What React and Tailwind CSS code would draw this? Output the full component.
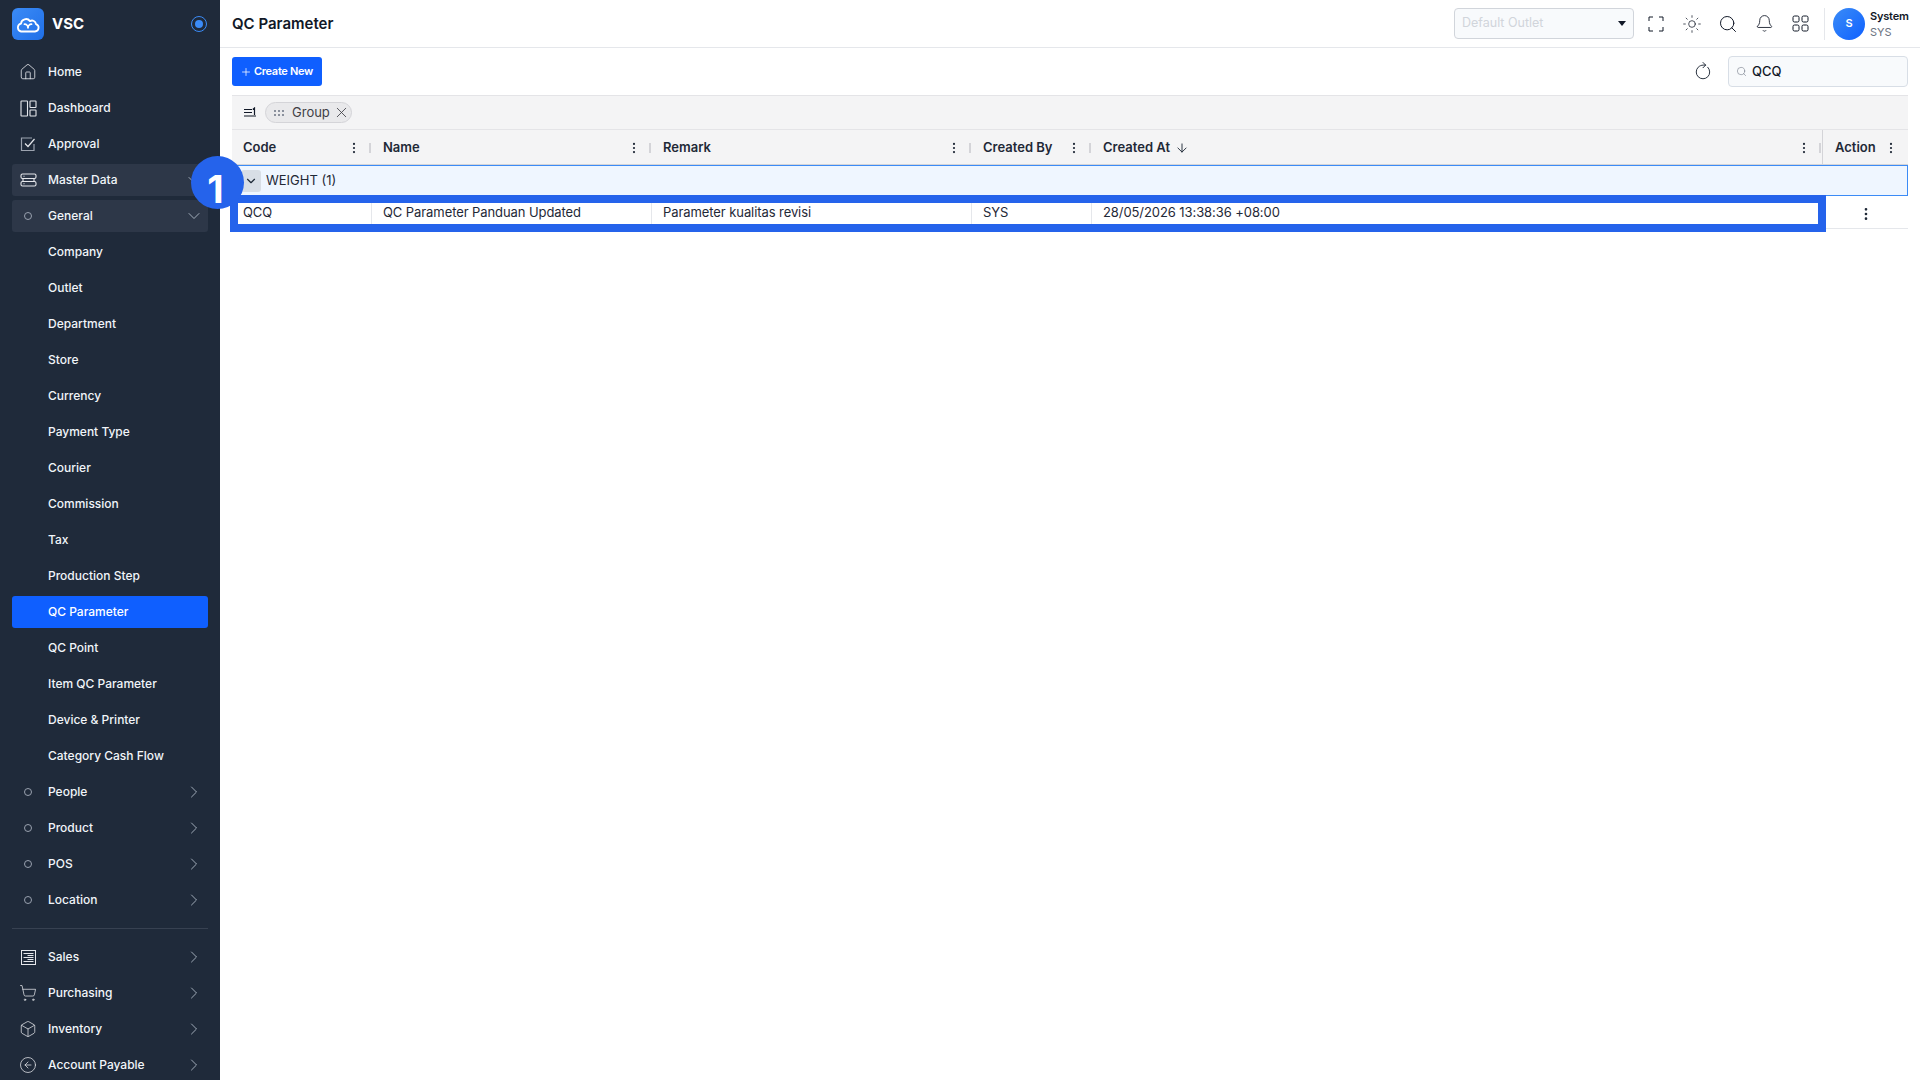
import React from 'react';
import { ChevronDown, ChevronRight, ArrowDown, X, Plus, Search, Bell, Sun, RotateCw, EllipsisVertical, Home, ShoppingCart, Box, CircleArrowLeft } from 'lucide-react';

const DashboardIcon = () => (
  <svg width="17" height="17" viewBox="0 0 17 17" fill="none" stroke="currentColor" strokeWidth="1.1">
    <rect x="1" y="1" width="6.5" height="15" rx="0.5" />
    <rect x="10" y="1" width="6" height="6.5" rx="0.5" />
    <rect x="10" y="10" width="6" height="6" rx="0.5" />
  </svg>
);

const ApprovalIcon = () => (
  <svg width="16" height="16" viewBox="0 0 16 16" fill="none" stroke="currentColor" strokeWidth="1.2">
    <path d="M14 8v6.5H1.5V2H12" stroke="#9ca3af" />
    <path d="M5 7.5l3 3 6.5-7.5" />
  </svg>
);

const ServerIcon = () => (
  <svg width="17" height="14" viewBox="0 0 17 14" fill="none" stroke="currentColor" strokeWidth="1.1">
    <rect x="1" y="1" width="15" height="4.5" rx="1.5" />
    <path d="M3 5.5v3M14 5.5v3" />
    <rect x="1" y="8.5" width="15" height="4.5" rx="1.5" />
    <path d="M3.5 3.2h1M3.5 10.8h1" />
  </svg>
);

const SalesIcon = () => (
  <svg width="15" height="15" viewBox="0 0 15 15" fill="none" stroke="currentColor" strokeWidth="1">
    <rect x="0.5" y="0.5" width="14" height="14" />
    <path d="M2.5 3.5h10M6.5 5.5h6M2.5 7.5h10M6.5 9.5h6M2.5 11.5h10" />
  </svg>
);

const CloudLogo = () => (
  <svg width="24" height="18" viewBox="0 0 24 18" fill="none" stroke="white" strokeWidth="1.8" strokeLinecap="round" strokeLinejoin="round">
    <path d="M5 16.5h14a3.8 3.8 0 0 0 1-7.4 4 4 0 0 0-6-3 5 5 0 0 0-9 2.6A4 4 0 0 0 5 16.5z" />
    <path d="M8.5 9.2c2 0 3.5 1.6 3.5 3.6 0-2 1.5-3.6 3.5-3.6" />
  </svg>
);

const ExpandIcon = () => (
  <svg width="16" height="16" viewBox="0 0 16 16" fill="none" stroke="#111827" strokeWidth="1">
    <path d="M1 5V1h4M11 1h4v4M15 11v4h-4M5 15H1v-4" />
  </svg>
);

const AppsIcon = () => (
  <svg width="17" height="17" viewBox="0 0 17 17" fill="none" stroke="#111827" strokeWidth="1">
    <rect x="1" y="1" width="6" height="6" rx="1.5" />
    <rect x="10" y="1" width="6" height="6" rx="1.5" />
    <rect x="1" y="10" width="6" height="6" rx="1.5" />
    <rect x="10" y="10" width="6" height="6" rx="1.5" />
  </svg>
);

const GroupSortIcon = () => (
  <svg width="13" height="11" viewBox="0 0 13 11" fill="none" stroke="#111827" strokeWidth="1.2">
    <path d="M0 2.5h8M0 5.5h8M0 9h12M10.5 8V1L8.8 2.5" />
  </svg>
);

const Dots = () => (
  <span className="grid grid-cols-3 gap-[2px]">
    {[0, 1, 2, 3, 4, 5].map((i) => (
      <span key={i} className="w-[2px] h-[2px] bg-gray-500 rounded-full" />
    ))}
  </span>
);

const Ring = () => <span className="w-[8px] h-[8px] rounded-full border border-gray-400" />;

const generalItems = ['Company', 'Outlet', 'Department', 'Store', 'Currency', 'Payment Type', 'Courier', 'Commission', 'Tax', 'Production Step', 'QC Parameter', 'QC Point', 'Item QC Parameter', 'Device & Printer', 'Category Cash Flow'];

const NavRow = ({ icon, label, chevron, active, shaded }) => (
  <div className={`h-8 shrink-0 flex items-center rounded-[3px] text-[12px] font-medium leading-none ${active ? 'bg-[#0f5fff] text-white' : shaded ? 'bg-[#2d3748] text-[#f1f5f9]' : 'text-[#f1f5f9]'}`}>
    <span className="w-[36px] pr-[4px] flex justify-center text-[#e5e7eb]">{icon}</span>
    <span className="flex-1">{label}</span>
    {chevron === 'down' && <ChevronDown size={20} strokeWidth={0.9} className="mr-[4px] text-[#cbd5e1]" />}
    {chevron === 'right' && <ChevronRight size={20} strokeWidth={0.9} className="mr-[4px] text-[#cbd5e1]" />}
  </div>
);

const Sidebar = () => (
  <aside className="w-[220px] shrink-0 h-[1080px] overflow-hidden bg-[#1f2a3a] px-3">
    <div className="h-[48px] flex items-center">
      <span className="w-8 h-8 rounded-[6px] bg-gradient-to-br from-[#3b8bf6] to-[#1f6fe8] flex items-center justify-center">
        <CloudLogo />
      </span>
      <span className="ml-2 flex-1 text-white text-[15px] font-bold">VSC</span>
      <span className="w-4 h-4 mr-[1px] rounded-full border border-[#3b8bf6] flex items-center justify-center">
        <span className="w-2 h-2 rounded-full bg-[#3b8bf6]" />
      </span>
    </div>
    <nav className="pt-[8px] flex flex-col gap-1">
      <NavRow icon={<Home size={18} strokeWidth={1.1} />} label="Home" />
      <NavRow icon={<DashboardIcon />} label="Dashboard" />
      <NavRow icon={<ApprovalIcon />} label="Approval" />
      <NavRow icon={<ServerIcon />} label="Master Data" chevron="down" shaded />
      <NavRow icon={<Ring />} label="General" chevron="down" shaded />
      {generalItems.map((item) => (
        <NavRow key={item} label={item} active={item === 'QC Parameter'} />
      ))}
      {['People', 'Product', 'POS', 'Location'].map((item) => (
        <NavRow key={item} icon={<Ring />} label={item} chevron="right" />
      ))}
      <div className="h-px shrink-0 bg-[#374151] my-2" />
      <NavRow icon={<SalesIcon />} label="Sales" chevron="right" />
      <NavRow icon={<ShoppingCart size={18} strokeWidth={1} />} label="Purchasing" chevron="right" />
      <NavRow icon={<Box size={18} strokeWidth={1} />} label="Inventory" chevron="right" />
      <NavRow icon={<CircleArrowLeft size={18} strokeWidth={1} />} label="Account Payable" chevron="right" />
    </nav>
  </aside>
);

const TopBar = () => (
  <header className="h-[48px] shrink-0 flex items-center border-b border-[#e5e7eb] pl-3 pr-3">
    <h1 className="flex-1 pt-[1px] text-[15px] font-semibold text-[#111827]">QC Parameter</h1>
    <div className="w-[180px] h-[31px] flex items-center justify-between rounded-[4px] border border-[#d1d5db] bg-[#f8fafc] pl-[7px] pr-[7px]">
      <span className="-mt-[1px] text-[12.5px] text-[#d1d5db]">Default Outlet</span>
      <span className="w-0 h-0 border-x-[4px] border-x-transparent border-t-[5px] border-t-[#111827]" />
    </div>
    <div className="flex items-center ml-[12px] gap-[16px]">
      <span className="w-5 flex justify-center"><ExpandIcon /></span>
      <span className="w-5 flex justify-center"><Sun size={20} strokeWidth={0.9} className="text-[#111827]" /></span>
      <span className="w-5 flex justify-center"><Search size={20} strokeWidth={1.2} className="text-[#111827]" /></span>
      <span className="w-5 flex justify-center"><Bell size={19} strokeWidth={1.1} className="text-[#111827]" /></span>
      <span className="w-5 flex justify-center"><AppsIcon /></span>
    </div>
    <div className="w-px h-8 bg-[#e5e7eb] ml-[14px]" />
    <span className="ml-[8px] w-8 h-8 rounded-full bg-gradient-to-br from-[#3b8bf6] to-[#0f5fff] flex items-center justify-center text-white text-[11px] font-semibold">S</span>
    <div className="ml-[5px] w-[38px] flex flex-col text-[11px] leading-[16px]">
      <span className="font-semibold text-[#111827] tracking-[-0.2px]">System</span>
      <span className="text-[#6b7280]">SYS</span>
    </div>
  </header>
);

const gridCols = 'grid grid-cols-[140px_280px_320px_120px_731px_85px]';

const HeadCell = ({ label, sort, last }) => (
  <div className={`relative flex items-center pl-[11px] pt-[1px] text-[13px] font-semibold text-[#1f2937] ${last ? 'border-r border-[#d4d4d8]' : ''}`}>
    <span>{label}</span>
    {sort && <ArrowDown size={14} strokeWidth={1.6} className="ml-[5px]" />}
    <span className="ml-auto mr-[1.5px] flex items-center gap-[8px]">
      <EllipsisVertical size={14} strokeWidth={1.8} className="text-[#1f2937]" />
      <span className="w-[2px] h-[10px] bg-[#d4d4d8]" />
    </span>
  </div>
);

const BodyCell = ({ children }) => (
  <div className="flex items-center pl-[11px] text-[13px] tracking-[-0.08px] text-[#1f2937] border-r border-[#e5e7eb]">{children}</div>
);

const Table = () => (
  <div className="mx-3 mt-[8px]">
    <div className="h-[35px] flex items-center gap-[8px] pl-[12px] bg-[#f4f4f5] border-y border-[#e4e4e7]">
      <GroupSortIcon />
      <span className="flex items-center h-[21px] pl-[8px] pr-[1px] rounded-full bg-[#e9e9eb] border border-[#d4d4d8] text-[13px] text-[#3f3f46]">
        <Dots />
        <span className="ml-[8px]">Group</span>
        <X size={17} strokeWidth={1.2} className="ml-[3px]" />
      </span>
    </div>
    <div className={`${gridCols} h-[35px] bg-[#f4f4f5] border-b border-[#d4d4d8]`}>
      <HeadCell label="Code" />
      <HeadCell label="Name" />
      <HeadCell label="Remark" />
      <HeadCell label="Created By" />
      <HeadCell label="Created At" sort last />
      <div className="flex items-center justify-between pl-[12px] pr-[10px] pt-[1px] text-[13px] font-semibold text-[#1f2937]">
        <span>Action</span>
        <EllipsisVertical size={14} strokeWidth={1.8} />
      </div>
    </div>
    <div className="h-[31px] flex items-center bg-[#eff6ff] border border-[#3b8bf6] pl-[8px] text-[13px] text-[#1f2937]">
      <span className="w-[20px] h-[22px] mr-[5px] pr-[1px] bg-[#d8dee6] rounded-[3px] flex items-center justify-center">
        <ChevronDown size={14} strokeWidth={2} />
      </span>
      WEIGHT (1)
    </div>
    <div className={`${gridCols} h-[33px] pt-[2px] border-b border-[#e5e7eb]`}>
      <BodyCell>QCQ</BodyCell>
      <BodyCell>QC Parameter Panduan Updated</BodyCell>
      <BodyCell>Parameter kualitas revisi</BodyCell>
      <BodyCell>SYS</BodyCell>
      <BodyCell>28/05/2026 13:38:36 +08:00</BodyCell>
      <div className="flex items-center justify-center pt-[1px]">
        <EllipsisVertical size={16} strokeWidth={2} className="text-[#1f2937]" />
      </div>
    </div>
  </div>
);

export default function App() {
  return (
    <div className="relative flex w-[1920px] h-[1080px] overflow-hidden bg-white font-['Inter',sans-serif]">
      <Sidebar />
      <main className="flex-1 min-w-0 flex flex-col">
        <TopBar />
        <div className="h-[31px] mt-[8px] mx-3 flex items-center justify-end">
          <button className="mr-auto h-[29px] w-[90px] flex items-center justify-center gap-[2px] pr-[1px] rounded-[3px] bg-[#0f5fff] text-white text-[11px] font-semibold tracking-[-0.3px]">
            <Plus size={12} strokeWidth={1.5} />
            Create New
          </button>
          <RotateCw size={18} strokeWidth={1.2} className="mr-[16px] text-[#1f2937] -rotate-45" />
          <div className="w-[180px] h-[31px] flex items-center rounded-[4px] border border-[#d8dee6] bg-[#f8fafc] pl-[7px]">
            <Search size={11} strokeWidth={1.2} className="text-[#6b7280]" />
            <span className="ml-[5px] text-[13px] font-medium text-[#111827]">QCQ</span>
          </div>
        </div>
        <Table />
      </main>
      <div className="absolute left-[230px] top-[195px] w-[1596px] h-[37px] border-[8px] border-[#2563eb]" />
      <div className="absolute left-[191px] top-[156px] w-[53px] h-[53px] pt-[13px] pr-[4px] rounded-full bg-[#2563eb] flex items-center justify-center text-white text-[38px] font-bold leading-none">1</div>
    </div>
  );
}
